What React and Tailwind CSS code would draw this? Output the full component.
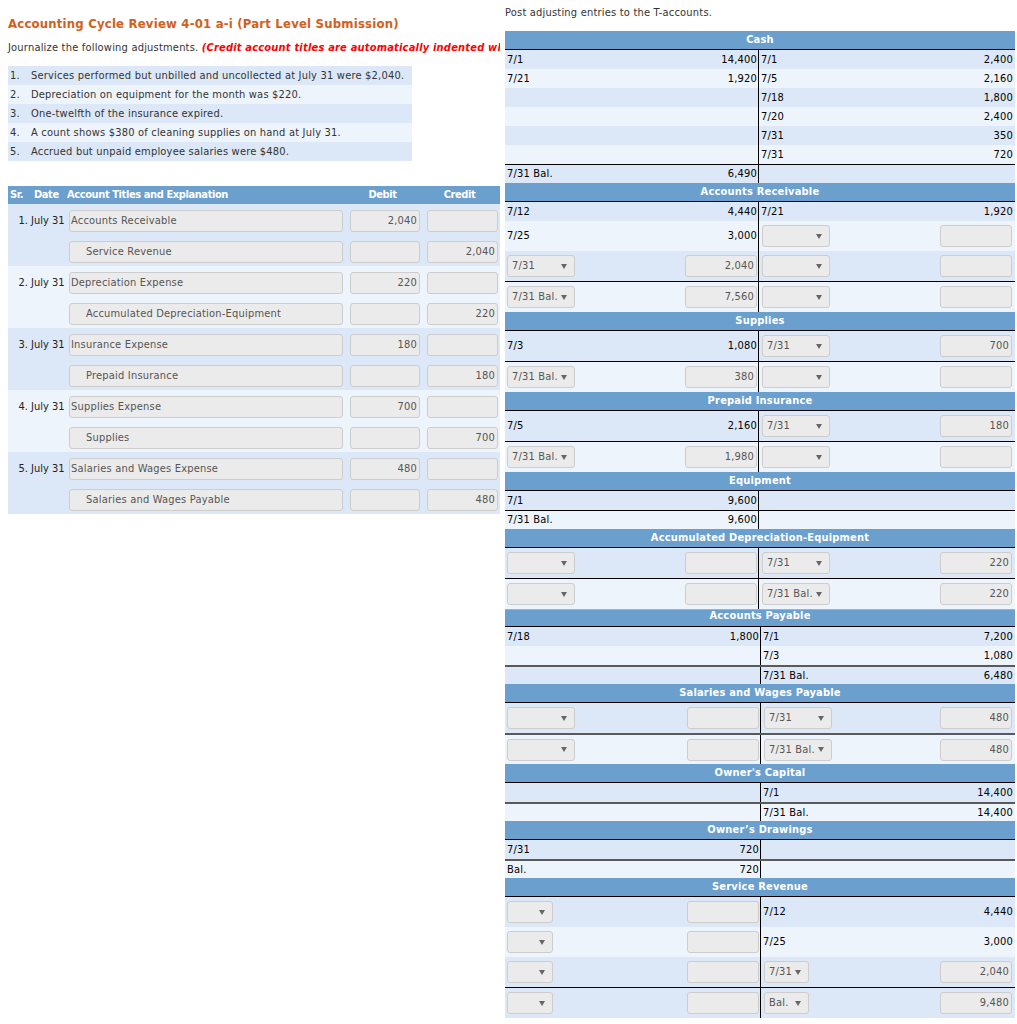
import React from 'react';

const FONT = "font-['DejaVu_Sans_Condensed','DejaVu_Sans',sans-serif]";

function Arrow() {
  return (
    <svg width="6" height="5" viewBox="0 0 6 5" className="shrink-0">
      <path d="M0 0H6L3 5Z" fill="#666" />
    </svg>
  );
}

function Sel({ v, w }) {
  return (
    <div className={`${w} h-[22px] shrink-0 rounded-[3px] border border-[#cdcdcd] bg-[#ebebeb] flex items-center justify-between pl-[4px] pr-[7px] text-[#555] overflow-hidden`}>
      <span className="whitespace-nowrap">{v}</span>
      <Arrow />
    </div>
  );
}

function Inp({ v, w, left }) {
  return (
    <div className={`${w} h-[22px] shrink-0 rounded-[3px] border border-[#cdcdcd] bg-[#ebebeb] flex items-center ${left ? 'justify-start pl-[1px]' : 'justify-end pr-[2px]'} text-[#555] whitespace-nowrap`}>
      {v}
    </div>
  );
}

function Cell({ c, side, narrow }) {
  if (!c) return null;
  if (c.s !== undefined) {
    const sw = narrow ? (side === 'l' ? 'w-[46px]' : 'w-[45px]') : 'w-[68px]';
    return (
      <div className={`flex items-center justify-between h-full ${side === 'l' ? 'pl-[2px] pr-[1px]' : 'pl-[3px] pr-[3px]'}`}>
        <Sel v={c.s} w={sw} />
        <Inp v={c.i} w="w-[72px]" />
      </div>
    );
  }
  return (
    <div className={`flex items-center justify-between h-full whitespace-nowrap text-black ${side === 'l' ? 'pl-[2px] pr-[1px]' : 'pl-[2px] pr-[2px]'}`}>
      <span>{c.t}</span>
      <span>{c.a}</span>
    </div>
  );
}

function TAcct({ title, rows, wide, clipped, narrow, gray }) {
  return (
    <div>
      {clipped ? (
        <div className="h-[17px] bg-[#6b9fce] border-b border-black overflow-hidden text-center text-white font-bold">
          <div className="-mt-[4px] leading-[19px]">{title}</div>
        </div>
      ) : (
        <div className="h-[19px] bg-[#6b9fce] border-b border-black text-center text-white font-bold leading-[18px]">
          {title}
        </div>
      )}
      {rows.map((r, i) => {
        const hasInput = (r.l && r.l.s !== undefined) || (r.r && r.r.s !== undefined);
        const h = hasInput ? (r.b ? 'h-[31px]' : 'h-[30px]') : 'h-[19px]';
        const dark = r.bg !== undefined ? r.bg : i % 2 === 0;
        const bg = dark ? 'bg-[#dce8f7]' : 'bg-[#eef4fc]';
        const bd = r.b ? (gray ? 'border-t-2 border-[#5a5a5a]' : 'border-t border-black') : '';
        return (
          <div key={i} className={`flex ${h} ${bg} ${bd}`}>
            <div className={`${wide ? 'w-[256px]' : 'w-[254px]'} shrink-0 border-r border-black`}>
              <Cell c={r.l} side="l" narrow={narrow} />
            </div>
            <div className="flex-1">
              <Cell c={r.r} side="r" narrow={narrow} />
            </div>
          </div>
        );
      })}
    </div>
  );
}

const E = { s: '', i: '' };

const accounts1 = [
  {
    title: 'Cash',
    rows: [
      { l: { t: '7/1', a: '14,400' }, r: { t: '7/1', a: '2,400' } },
      { l: { t: '7/21', a: '1,920' }, r: { t: '7/5', a: '2,160' } },
      { l: null, r: { t: '7/18', a: '1,800' } },
      { l: null, r: { t: '7/20', a: '2,400' } },
      { l: null, r: { t: '7/31', a: '350' } },
      { l: null, r: { t: '7/31', a: '720' } },
      { l: { t: '7/31 Bal.', a: '6,490' }, r: null, b: true },
    ],
  },
  {
    title: 'Accounts Receivable',
    rows: [
      { l: { t: '7/12', a: '4,440' }, r: { t: '7/21', a: '1,920' } },
      { l: { t: '7/25', a: '3,000' }, r: E },
      { l: { s: '7/31', i: '2,040' }, r: E },
      { l: { s: '7/31 Bal.', i: '7,560' }, r: E, b: true },
    ],
  },
  {
    title: 'Supplies',
    rows: [
      { l: { t: '7/3', a: '1,080' }, r: { s: '7/31', i: '700' } },
      { l: { s: '7/31 Bal.', i: '380' }, r: E, b: true },
    ],
  },
  {
    title: 'Prepaid Insurance',
    rows: [
      { l: { t: '7/5', a: '2,160' }, r: { s: '7/31', i: '180' } },
      { l: { s: '7/31 Bal.', i: '1,980' }, r: E, b: true },
    ],
  },
  {
    title: 'Equipment',
    rows: [
      { l: { t: '7/1', a: '9,600' }, r: null },
      { l: { t: '7/31 Bal.', a: '9,600' }, r: null, b: true },
    ],
  },
  {
    title: 'Accumulated Depreciation-Equipment',
    rows: [
      { l: E, r: { s: '7/31', i: '220' } },
      { l: E, r: { s: '7/31 Bal.', i: '220' }, b: true },
    ],
  },
];

const list = [
  'Services performed but unbilled and uncollected at July 31 were $2,040.',
  'Depreciation on equipment for the month was $220.',
  'One-twelfth of the insurance expired.',
  'A count shows $380 of cleaning supplies on hand at July 31.',
  'Accrued but unpaid employee salaries were $480.',
];

const entries = [
  ['Accounts Receivable', '2,040', 'Service Revenue'],
  ['Depreciation Expense', '220', 'Accumulated Depreciation-Equipment'],
  ['Insurance Expense', '180', 'Prepaid Insurance'],
  ['Supplies Expense', '700', 'Supplies'],
  ['Salaries and Wages Expense', '480', 'Salaries and Wages Payable'],
];

export default function App() {
  return (
    <div className={`${FONT} text-[11px] leading-[14px] tracking-[0.2px] text-[#333] bg-white w-[1017px] h-[1024px] flex overflow-hidden`}>
      {/* Left panel */}
      <div className="w-[500px] shrink-0 overflow-hidden pl-[8px] pt-[15px]">
        <div className="text-[13px] leading-[18px] font-bold text-[#d2601a] whitespace-nowrap">
          Accounting Cycle Review 4-01 a-i (Part Level Submission)
        </div>
        <div className="mt-[8px] whitespace-nowrap leading-[14px]">
          Journalize the following adjustments.{' '}
          <span className="text-[#ff0000] font-bold italic">
            (Credit account titles are automatically indented when the amount is entered. Do not indent manually.)
          </span>
        </div>
        <div className="mt-[11px] w-[404px]">
          {list.map((t, i) => (
            <div key={i} className={`h-[19px] flex items-center ${i % 2 === 0 ? 'bg-[#dce8f7]' : 'bg-[#eef4fc]'}`}>
              <span className="w-[23px] pl-[2px] shrink-0">{i + 1}.</span>
              <span className="whitespace-nowrap">{t}</span>
            </div>
          ))}
        </div>
        <div className="mt-[25px] w-[492px]">
          <div className="h-[18px] bg-[#6b9fce] text-white font-bold flex items-center tracking-[-0.4px]">
            <span className="pl-[2px] w-[26px]">Sr.</span>
            <span className="w-[33px]">Date</span>
            <span className="w-[277px]">Account Titles and Explanation</span>
            <span className="w-[77px] text-center">Debit</span>
            <span className="w-[77px] text-center">Credit</span>
          </div>
          {entries.map((e, i) => (
            <div key={i} className={`${i % 2 === 0 ? 'bg-[#dce8f7]' : 'bg-[#eef4fc]'} flex`}>
              <div className="w-[61px] shrink-0 pt-[10px] flex text-[#222] tracking-[0px]">
                <span className="w-[14px] text-right shrink-0 ml-[6px]">{i + 1}.</span>
                <span className="ml-[3px] whitespace-nowrap">July 31</span>
              </div>
              <div className="flex flex-col">
                <div className="h-[31px] pt-[6px] flex gap-[7px]">
                  <Inp v={e[0]} w="w-[274px]" left />
                  <Inp v={e[1]} w="w-[70px]" />
                  <Inp v="" w="w-[71px]" />
                </div>
                <div className="h-[31px] pt-[6px] flex gap-[7px]">
                  <div className="w-[274px] h-[22px] shrink-0 rounded-[3px] border border-[#cdcdcd] bg-[#ebebeb] flex items-center pl-[16px] text-[#555] whitespace-nowrap">
                    {e[2]}
                  </div>
                  <Inp v="" w="w-[70px]" />
                  <Inp v={e[1]} w="w-[71px]" />
                </div>
              </div>
            </div>
          ))}
        </div>
      </div>

      {/* Right panel */}
      <div className="ml-[5px] w-[510px] shrink-0">
        <div className="h-[31px] pt-[6px] leading-[14px] text-[#333]">Post adjusting entries to the T-accounts.</div>
        {accounts1.map((a, i) => (
          <TAcct key={i} title={a.title} rows={a.rows} />
        ))}
        <div className="h-[1px] bg-[#8fb6dc]" />
        <TAcct
          title="Accounts Payable"
          clipped
          wide
          gray
          rows={[
            { l: { t: '7/18', a: '1,800' }, r: { t: '7/1', a: '7,200' } },
            { l: null, r: { t: '7/3', a: '1,080' } },
            { l: null, r: { t: '7/31 Bal.', a: '6,480' }, b: true, bg: true },
          ]}
        />
        <TAcct
          title="Salaries and Wages Payable"
          wide
          gray
          rows={[
            { l: E, r: { s: '7/31', i: '480' } },
            { l: E, r: { s: '7/31 Bal.', i: '480' }, b: true },
          ]}
        />
        <TAcct
          title="Owner's Capital"
          wide
          gray
          rows={[
            { l: null, r: { t: '7/1', a: '14,400' } },
            { l: null, r: { t: '7/31 Bal.', a: '14,400' }, b: true },
          ]}
        />
        <TAcct
          title="Owner’s Drawings"
          wide
          gray
          rows={[
            { l: { t: '7/31', a: '720' }, r: null },
            { l: { t: 'Bal.', a: '720' }, r: null, b: true },
          ]}
        />
        <TAcct
          title="Service Revenue"
          wide
          narrow
          rows={[
            { l: E, r: { t: '7/12', a: '4,440' } },
            { l: E, r: { t: '7/25', a: '3,000' } },
            { l: E, r: { s: '7/31', i: '2,040' } },
            { l: E, r: { s: 'Bal.', i: '9,480' }, b: true, bg: true },
          ]}
        />
      </div>
    </div>
  );
}
